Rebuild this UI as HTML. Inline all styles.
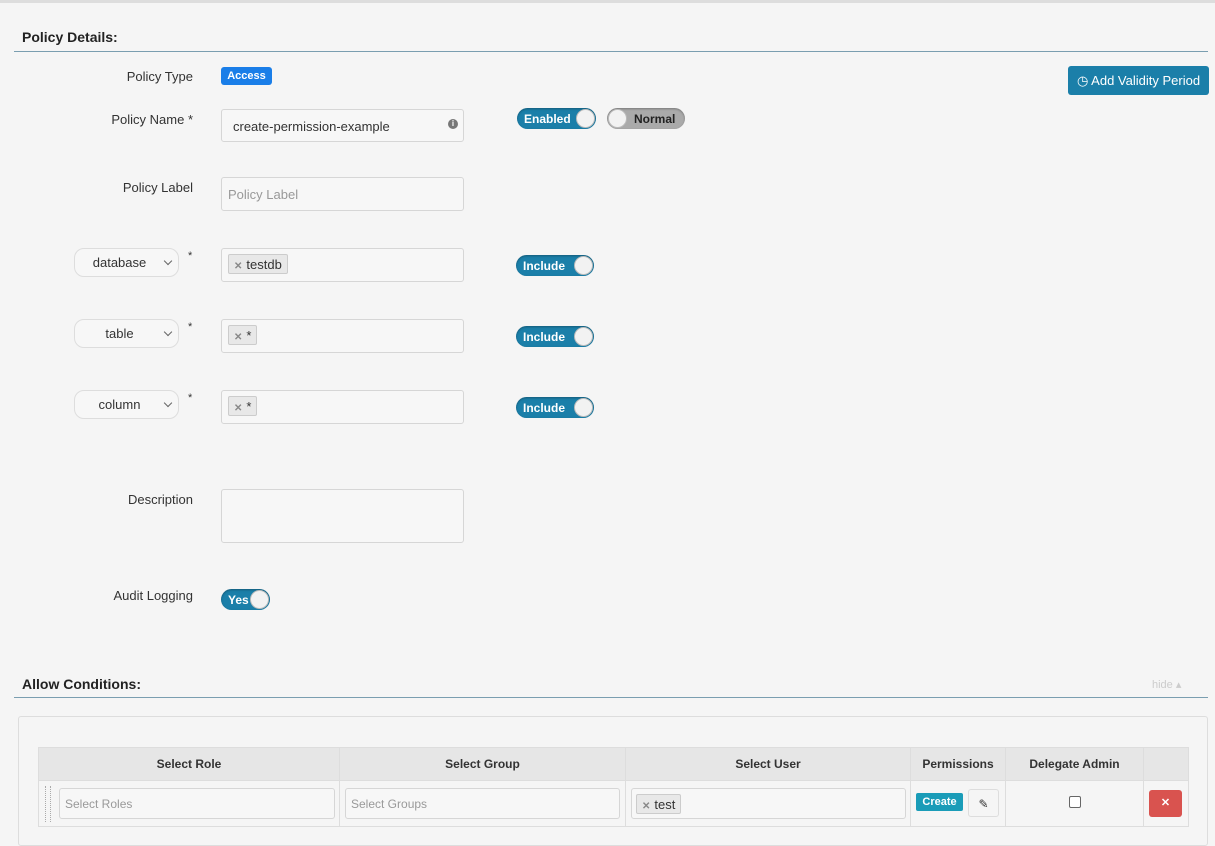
<!DOCTYPE html>
<html><head><style>
body{margin:0;width:1215px;height:833px;background:#f5f5f5;font-family:"Liberation Sans",sans-serif;font-size:13px;color:#333;position:relative;overflow:hidden}
.a{position:absolute}
.topbar{left:0;top:0;width:1215px;height:3px;background:#ddd}
h3{position:absolute;margin:0;font-size:14px;font-weight:bold;color:#222}
.line{position:absolute;height:1px;background:#7a9eb0}
.lbl{position:absolute;text-align:right;width:193px;left:0;font-size:13px;color:#333}
.inp{position:absolute;background:#f7f7f7;border:1px solid #d6d6d6;border-radius:3px;box-sizing:border-box}
.tog{position:absolute;height:21px;border-radius:11px;background:#1b7fa9;color:#fff;font-weight:bold;font-size:12px;line-height:22px;box-sizing:border-box;padding-left:7px;box-shadow:inset 0 1px 2px rgba(0,0,0,.3)}
.knob{position:absolute;right:1px;top:1px;width:19px;height:19px;border-radius:50%;background:#f2f2f2;border:1px solid #bbb;box-sizing:border-box}
.sel{position:absolute;left:74px;width:105px;height:29px;border:1px solid #ddd;border-radius:10px;background:#f7f7f7;box-sizing:border-box;font-size:13px;line-height:27px;text-align:center;padding-right:14px}
.sel:after{content:"";position:absolute;right:7px;top:9px;width:5px;height:5px;border-right:1px solid #666;border-bottom:1px solid #666;transform:rotate(45deg)}
.star{position:absolute;left:188px;font-size:11px}
.tag{position:absolute;left:6px;top:5px;height:20px;border:1px solid #ccc;background:#e8e8e8;border-radius:2px;font-size:13px;line-height:19px;padding:0 5px;box-sizing:border-box}
.tag b{color:#888;font-size:10px;margin-right:4px}
th,td{border:1px solid #ddd;padding:0}
</style></head><body>
<div class="a topbar"></div>
<h3 style="left:22px;top:29px">Policy Details:</h3>
<div class="line" style="left:14px;top:51px;width:1194px"></div>

<div class="lbl" style="top:69px">Policy Type</div>
<div class="a" style="left:221px;top:67px;width:51px;height:18px;background:#1a7ee8;border-radius:3px;color:#fff;font-weight:bold;font-size:11px;line-height:18px;text-align:center">Access</div>
<div class="a" style="left:1068px;top:66px;width:141px;height:29px;background:#1b7fa9;border-radius:3px;color:#fff;font-size:13px;line-height:29px;text-align:center">&#9719; Add Validity Period</div>

<div class="lbl" style="top:112px">Policy Name *</div>
<div class="inp" style="left:221px;top:109px;width:243px;height:33px;padding:9px 11px;font-size:13px">create-permission-example<span style="position:absolute;right:5px;top:9px;width:10px;height:10px;border-radius:50%;background:#777;color:#fff;font-size:8px;line-height:10px;text-align:center;font-weight:bold">i</span></div>
<div class="tog" style="left:517px;top:108px;width:79px">Enabled<div class="knob"></div></div>
<div class="tog" style="left:607px;top:108px;width:78px;background:#aaa;color:#222;padding-left:27px"><div class="knob" style="left:1px;right:auto"></div>Normal</div>

<div class="lbl" style="top:180px">Policy Label</div>
<div class="inp" style="left:221px;top:177px;width:243px;height:34px;padding:9px 6px;color:#999">Policy Label</div>

<div class="sel" style="top:248px">database</div><div class="star" style="top:250px">*</div>
<div class="inp" style="left:221px;top:248px;width:243px;height:34px"><div class="tag"><b>✕</b>testdb</div></div>
<div class="tog" style="left:516px;top:255px;width:78px">Include<div class="knob"></div></div>

<div class="sel" style="top:319px">table</div><div class="star" style="top:321px">*</div>
<div class="inp" style="left:221px;top:319px;width:243px;height:34px"><div class="tag"><b>✕</b>*</div></div>
<div class="tog" style="left:516px;top:326px;width:78px">Include<div class="knob"></div></div>

<div class="sel" style="top:390px">column</div><div class="star" style="top:392px">*</div>
<div class="inp" style="left:221px;top:390px;width:243px;height:34px"><div class="tag"><b>✕</b>*</div></div>
<div class="tog" style="left:516px;top:397px;width:78px">Include<div class="knob"></div></div>

<div class="lbl" style="top:492px">Description</div>
<div class="inp" style="left:221px;top:489px;width:243px;height:54px"></div>

<div class="lbl" style="top:588px">Audit Logging</div>
<div class="tog" style="left:221px;top:589px;width:49px">Yes<div class="knob"></div></div>

<h3 style="left:22px;top:676px">Allow Conditions:</h3>
<div class="a" style="left:1152px;top:678px;font-size:11px;color:#ccc">hide &#9652;</div>
<div class="line" style="left:14px;top:697px;width:1194px"></div>

<div class="a" style="left:18px;top:716px;width:1190px;height:130px;border:1px solid #ddd;border-radius:3px;box-sizing:border-box"></div>
<table class="a" style="left:38px;top:747px;width:1151px;border-collapse:collapse;font-size:12px">
<tr style="height:33px;background:#e6e6e6;font-weight:bold;text-align:center;color:#333">
<th style="width:300px">Select Role</th><th style="width:285px">Select Group</th><th style="width:284px">Select User</th><th style="width:94px">Permissions</th><th style="width:137px">Delegate Admin</th><th></th></tr>
<tr style="height:46px">
<td style="position:relative"><div class="inp" style="left:20px;top:7px;width:276px;height:31px;padding:8px 5px;color:#999">Select Roles</div><div class="a" style="left:6px;top:5px;width:4px;height:36px;border-left:1px dotted #aaa;border-right:1px dotted #aaa"></div></td>
<td style="position:relative"><div class="inp" style="left:5px;top:7px;width:275px;height:31px;padding:8px 5px;color:#999">Select Groups</div></td>
<td style="position:relative"><div class="inp" style="left:5px;top:7px;width:275px;height:31px"><div class="tag" style="top:5px;left:4px"><b>✕</b>test</div></div></td>
<td style="position:relative"><div class="a" style="left:5px;top:12px;width:47px;height:18px;background:#1a9cb8;border-radius:2px;color:#fff;font-weight:bold;font-size:11px;line-height:18px;text-align:center">Create</div><div class="a" style="left:57px;top:8px;width:31px;height:28px;border:1px solid #ddd;border-radius:3px;text-align:center;line-height:28px;font-size:12px;box-sizing:border-box">&#9998;</div></td>
<td style="position:relative"><div class="a" style="left:63px;top:15px;width:10px;height:10px;border:1px solid #666;border-radius:2px;background:#fff"></div></td>
<td style="position:relative"><div class="a" style="left:5px;top:9px;width:33px;height:27px;background:#d9534f;border-radius:3px;color:#fff;text-align:center;line-height:27px;font-size:11px;font-weight:bold">✕</div></td>
</tr></table>
</body></html>
